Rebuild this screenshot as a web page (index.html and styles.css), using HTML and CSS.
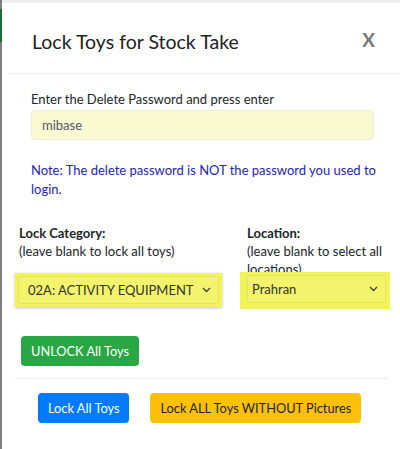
FILE: index.html
```html
<!DOCTYPE html>
<html>
<head>
<meta charset="utf-8">
<link rel="stylesheet" href="styles.css">
</head>
<body>
<div class="frame">
  <div class="edge"><div class="edge-green"></div></div>
  <div class="modal">
    <div class="modal-header">
      <h4 class="title">Lock Toys for Stock Take</h4>
      <span class="close">X</span>
    </div>
    <div class="modal-body">
      <div class="pw">
        <label class="pw-label">Enter the Delete Password and press enter</label>
        <div class="pw-input">mibase</div>
        <p class="note">Note: The delete password is NOT the password you used to login.</p>
      </div>
      <div class="row">
        <div class="col col-left">
          <div class="lbl">Lock Category:</div>
          <div class="hint">(leave blank to lock all toys)</div>
          <div class="sel-wrap sel-left">
            <div class="sel">
              <span>02A: ACTIVITY EQUIPMENT</span>
              <svg class="chev" width="9" height="6" viewBox="0 0 9 6"><path d="M1 1 L4.5 4.5 L8 1" fill="none" stroke="#444" stroke-width="1.4"/></svg>
            </div>
          </div>
        </div>
        <div class="col col-right">
          <div class="lbl">Location:</div>
          <div class="hint">(leave blank to select all locations)</div>
          <div class="sel-wrap sel-right">
            <div class="sel">
              <span>Prahran</span>
              <svg class="chev" width="9" height="6" viewBox="0 0 9 6"><path d="M1 1 L4.5 4.5 L8 1" fill="none" stroke="#444" stroke-width="1.4"/></svg>
            </div>
          </div>
        </div>
      </div>
      <div class="unlock-row"><button class="btn btn-green">UNLOCK All Toys</button></div>
    </div>
    <div class="modal-footer">
      <button class="btn btn-blue">Lock All Toys</button>
      <button class="btn btn-yellow">Lock ALL Toys WITHOUT Pictures</button>
    </div>
  </div>
</div>
</body>
</html>
```

FILE: styles.css
```css
html, body {
  margin: 0;
  padding: 0;
  background: #fff;
}
body {
  font-family: "Segoe UI", Lato, "Noto Sans", sans-serif;
  color: #212529;
  font-size: 13px;
}
.frame {
  display: flex;
  height: 449px;
  width: 400px;
  overflow: hidden;
}
.edge {
  width: 2px;
  background: #7d7d7d;
  flex: none;
}
.edge-green {
  margin-top: 9px;
  height: 33px;
  background: #1f6a35;
}
.modal {
  flex: 1;
  min-width: 0;
  border-top: 3px solid #eeeeee;
  background: #fff;
  display: flex;
  flex-direction: column;
}
.modal-header {
  display: flex;
  align-items: center;
  justify-content: space-between;
  height: 71px;
  padding: 6px 25px 0 24px;
  margin-left: 6px;
  border-bottom: 1px solid #eceeef;
  box-sizing: border-box;
}
.title {
  margin: 0;
  font-weight: 400;
  font-size: 19.5px;
  color: #222;
}
.close {
  font-size: 19px;
  font-weight: 700;
  color: #777;
  margin-top: -4px;
}
.modal-body {
  padding: 16px 12px 0 17px;
}
.pw {
  padding: 0 14px 0 12px;
}
.pw-label {
  display: block;
  font-size: 13px;
  line-height: 18px;
  margin-bottom: 2px;
}
.pw-input {
  height: 28px;
  border: 1px solid #ececd6;
  border-radius: 4px;
  background: #fafad2;
  color: #556;
  padding: 0 10px;
  line-height: 28px;
  font-size: 13px;
}
.note {
  margin: 21px -8px 0 0;
  color: #2424b8;
  font-size: 13px;
  line-height: 19px;
}
.row {
  display: flex;
  margin-top: 25px;
}
.col {
  display: flex;
  flex-direction: column;
}
.col-left {
  width: 228px;
  flex: none;
}
.col-right {
  flex: 1;
  min-width: 0;
}
.lbl {
  font-weight: 700;
  font-size: 13px;
  line-height: 18px;
}
.hint {
  font-size: 13px;
  line-height: 18px;
}
.sel-wrap {
  background: #f2f25a;
  padding: 3px;
  box-sizing: border-box;
}
.sel-left {
  margin: 13px 0 0 -4px;
  width: 207px;
  box-shadow: 0 1px 3px rgba(0,0,0,0.25);
}
.sel-right {
  margin: -6px 0 0 -7px;
  width: 150px;
  padding: 3px 4px 6px 7px;
}
.sel {
  display: flex;
  align-items: center;
  justify-content: space-between;
  height: 26px;
  background: #f4f46c;
  border: 1px solid #e4e45a;
  border-radius: 3px;
  padding: 0 7px 0 9px;
  font-size: 13px;
  color: #333;
  white-space: nowrap;
}
.sel-right .sel {
  padding-left: 4px;
}
.chev {
  flex: none;
}
.unlock-row {
  margin-top: 27px;
  padding-bottom: 12px;
}
.btn {
  font-family: inherit;
  font-size: 12.8px;
  border: none;
  border-radius: 4px;
  height: 30px;
  padding: 0 10px;
  white-space: nowrap;
  flex: none;
}
.btn-green {
  background: #28a745;
  color: #fff;
  margin-left: 2px;
}
.modal-footer {
  margin: 0 12px 0 13px;
  border-top: 1px solid #eceeef;
  padding: 14px 0 0 23px;
  display: flex;
  gap: 21px;
}
.btn-blue {
  background: #007bff;
  color: #fff;
}
.btn-yellow {
  background: #ffc107;
  color: #212529;
}
```
